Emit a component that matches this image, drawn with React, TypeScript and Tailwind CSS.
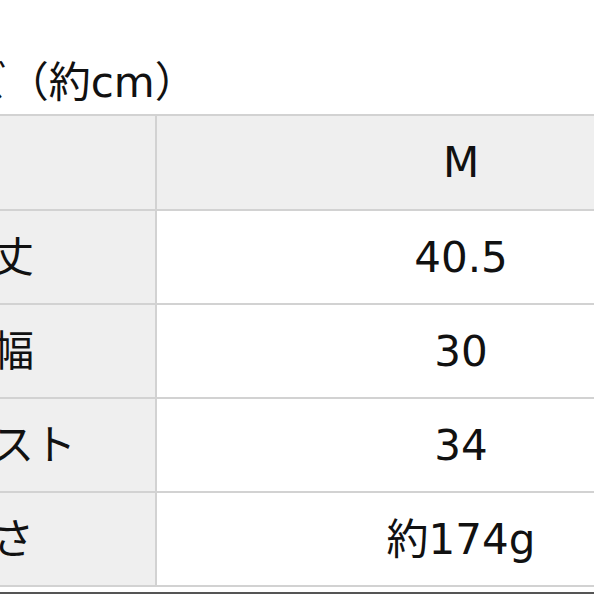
const rows = [
  { label: '着丈', value: '40.5' },
  { label: '身幅', value: '30' },
  { label: 'バスト', value: '34' },
  { label: '重さ', value: '約174g' },
];

export default function App() {
  return (
    <div
      className="w-[594px] h-[594px] overflow-hidden bg-white text-[#111]"
      style={{ fontFamily: '"DejaVu Sans", "Noto Sans CJK JP", sans-serif' }}
    >
      <div className="ml-[-123px] w-[900px]">
        <div className="h-[114px] pt-[57px] pl-[5px] text-[42px] leading-[52px] whitespace-nowrap">
          サイズ（約cm）
        </div>

        <div className="border-t-2 border-[#d2d2d2]">
          <div className="flex h-[95px] border-b-2 border-[#d2d2d2] bg-[#efefef]">
            <div className="w-[280px] shrink-0 border-r-2 border-[#d2d2d2]" />
            <div className="w-[608px] flex items-center justify-center text-[42px]">M</div>
          </div>
          {rows.map((r) => (
            <div key={r.label} className="flex h-[94px] border-b-2 border-[#d2d2d2]">
              <div className="w-[280px] shrink-0 border-r-2 border-[#d2d2d2] bg-[#efefef] flex items-center pl-[73px] text-[42px] whitespace-nowrap">
                {r.label}
              </div>
              <div className="w-[608px] flex items-center justify-center text-[42px] bg-white">
                {r.value}
              </div>
            </div>
          ))}
        </div>
        <div className="mt-[5px] h-[4px] bg-[#555]" />
      </div>
    </div>
  );
}
